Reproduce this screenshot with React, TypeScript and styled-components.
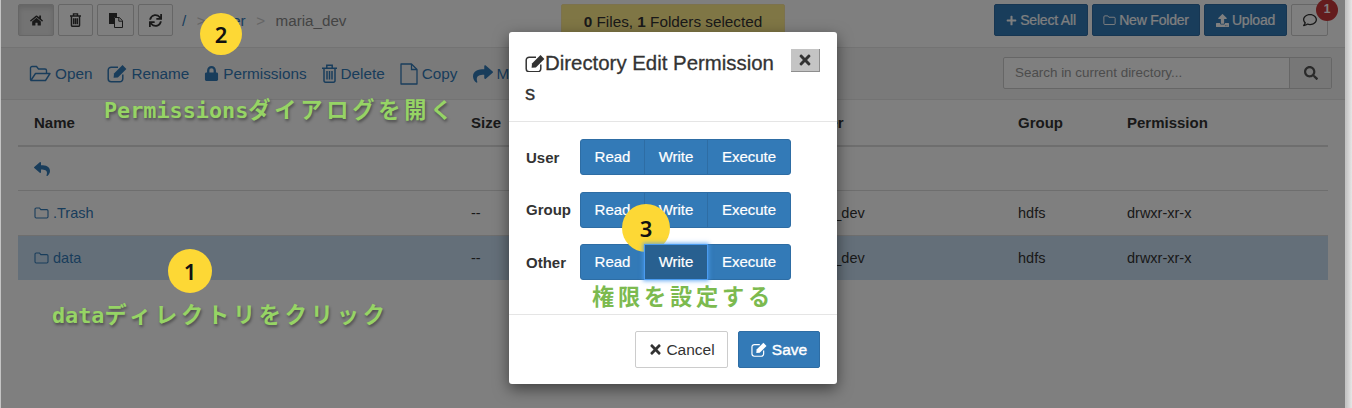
import React from 'react';
import styled, { createGlobalStyle } from 'styled-components';
import {
  FaHome,
  FaSync,
  FaPlus,
  FaUpload,
  FaRegComment,
  FaLock,
  FaShare,
  FaSearch,
  FaReply,
  FaTimes,
} from 'react-icons/fa';

const GlobalStyle = createGlobalStyle`
  html, body {
    margin: 0;
    padding: 0;
    background: #fff;
  }
`;

const Page = styled.div`
  position: relative;
  width: 1352px;
  height: 408px;
  overflow: hidden;
  background: linear-gradient(90deg, #c4c4c4 0, #c4c4c4 1346px, #e6e6e6 1352px);
  color: #333;
  font-family: 'Liberation Sans', Arial, sans-serif;
  font-size: 15px;
`;

const Shell = styled.div`
  width: 1344px;
  height: 408px;
  margin-left: 1px;
  background: #fff;
`;

const TopBar = styled.div`
  display: grid;
  grid-template-columns: 1fr 224px 1fr;
  height: 47px;
  padding: 4px 17px 0 17px;
  box-sizing: border-box;
`;

const Left = styled.div`
  display: flex;
  gap: 4px;
  align-items: flex-start;
`;

const IconButton = styled.button<{ $active?: boolean; $w: number }>`
  display: flex;
  align-items: center;
  justify-content: center;
  width: ${(p) => p.$w}px;
  height: 32px;
  padding: 0;
  border: 1px solid #ccc;
  border-radius: 2px;
  background: ${(p) => (p.$active ? '#e6e6e6' : '#fff')};
  box-shadow: ${(p) => (p.$active ? 'inset 0 3px 5px rgba(0,0,0,.125)' : 'none')};
  color: #333;
  font-size: 13px;
`;

const Crumbs = styled.div`
  display: flex;
  align-items: center;
  gap: 10.5px;
  height: 32px;
  margin-left: 5px;
  font-size: 15.2px;
`;

const CrumbLink = styled.span`
  color: #337ab7;
`;

const CrumbSep = styled.span`
  color: #ccc;
`;

const CrumbCurrent = styled.span`
  color: #888;
`;

const Selected = styled.div`
  height: 32px;
  line-height: 34px;
  text-align: center;
  background: #ffec8b;
  border: 1px solid #f8e59a;
  border-radius: 2px;
  box-sizing: border-box;
  font-size: 15.3px;
`;

const Right = styled.div`
  display: flex;
  gap: 4px;
  justify-content: flex-end;
  align-items: flex-start;
`;

const PrimaryButton = styled.button<{ $w: number }>`
  display: flex;
  align-items: center;
  justify-content: center;
  gap: 3px;
  width: ${(p) => p.$w}px;
  height: 32px;
  padding: 0;
  border: 1px solid #2e6da4;
  border-radius: 2px;
  background: #337ab7;
  color: #fff;
  font-family: inherit;
  font-size: 14px;
  letter-spacing: -0.2px;
  -webkit-text-stroke: 0.2px #fff;
`;

const CommentButton = styled(IconButton)`
  position: relative;
  font-size: 14px;
`;

const Badge = styled.span`
  position: absolute;
  top: -6px;
  right: -11px;
  width: 22px;
  height: 22px;
  border-radius: 50%;
  background: #c9393a;
  color: #fff;
  font-size: 12px;
  font-weight: 700;
  line-height: 20px;
  text-align: center;
`;

const Toolbar = styled.div`
  display: flex;
  align-items: center;
  justify-content: space-between;
  height: 53px;
  padding: 0 13px 0 28px;
  box-sizing: border-box;
  background: #f5f5f5;
  border-top: 1px solid #e7e7e7;
  border-bottom: 1px solid #e7e7e7;
`;

const Actions = styled.div`
  display: flex;
  gap: 15px;
`;

const Action = styled.span`
  display: flex;
  align-items: center;
  gap: 4px;
  color: #337ab7;
  font-size: 15.3px;
  white-space: nowrap;
`;

const Search = styled.div`
  display: flex;
  width: 329px;
  height: 32px;
  margin-top: -2px;
  box-sizing: border-box;
  border: 1px solid #ccc;
  border-radius: 2px;
  background: #fff;
`;

const SearchInput = styled.div`
  flex: 1;
  padding-left: 11px;
  color: #999;
  font-size: 13.4px;
  line-height: 30px;
`;

const SearchButton = styled.div`
  display: flex;
  align-items: center;
  justify-content: center;
  width: 41px;
  border-left: 1px solid #ccc;
  background: #eee;
  color: #555;
  font-size: 14px;
`;

const Table = styled.div`
  margin: 0 17px;
`;

const Row = styled.div<{ $head?: boolean; $selected?: boolean; $h: number }>`
  display: grid;
  grid-template-columns: 437px 326px 221px 109px 1fr;
  align-items: center;
  height: ${(p) => p.$h}px;
  padding-left: 16px;
  box-sizing: border-box;
  font-weight: ${(p) => (p.$head ? 700 : 400)};
  background: ${(p) => (p.$selected ? '#c9dff2' : 'transparent')};
  border-bottom: ${(p) => (p.$head ? '2px solid #ddd' : p.$selected ? 'none' : '1px solid #ddd')};
  font-size: ${(p) => (p.$head ? 15 : 14.5)}px;
`;

const FileLink = styled.span`
  display: flex;
  align-items: center;
  gap: 4px;
  color: #337ab7;
`;

const BackLink = styled(FileLink)`
  font-size: 16px;
`;

const Backdrop = styled.div`
  position: absolute;
  top: 0;
  bottom: 0;
  left: 1px;
  right: 7px;
  background: rgba(0, 0, 0, 0.5);
`;

const Modal = styled.div`
  position: absolute;
  left: 509px;
  top: 32px;
  width: 328px;
  height: 352px;
  display: flex;
  flex-direction: column;
  background: #fff;
  border-radius: 3px;
  box-shadow: 0 5px 15px rgba(0, 0, 0, 0.5);
`;

const ModalHeader = styled.div`
  display: flex;
  justify-content: space-between;
  align-items: flex-start;
  height: 90px;
  flex: none;
  padding: 16px 17px 0 16px;
  box-sizing: border-box;
  border-bottom: 1px solid #e5e5e5;
`;

const ModalTitle = styled.div`
  width: 254px;
  font-size: 20.4px;
  line-height: 30px;
  word-break: break-all;
  -webkit-text-stroke: 0.3px #333;
  svg {
    vertical-align: -2px;
  }
`;

const CloseButton = styled.div`
  display: flex;
  align-items: center;
  justify-content: center;
  width: 29px;
  height: 23px;
  margin-top: 1px;
  box-sizing: border-box;
  background: #c4c4c4;
  border-right: 1px solid #8e8e8e;
  border-bottom: 1px solid #8e8e8e;
  color: #333;
  font-size: 16px;
`;

const ModalBody = styled.div`
  flex: 1;
  padding: 17px 17px 0;
  display: flex;
  flex-direction: column;
  gap: 16.5px;
`;

const PermRow = styled.div`
  display: flex;
  align-items: center;
  height: 36px;
`;

const PermLabel = styled.div`
  width: 54px;
  font-weight: 700;
  font-size: 15px;
`;

const BtnGroup = styled.div`
  display: flex;
  height: 36px;
`;

const PermBtn = styled.div<{ $w: number; $on?: boolean }>`
  width: ${(p) => p.$w}px;
  line-height: 34px;
  text-align: center;
  box-sizing: border-box;
  color: #fff;
  font-size: 15px;
  -webkit-text-stroke: 0.2px #fff;
  background: ${(p) => (p.$on ? '#286090' : '#337ab7')};
  border: 1px solid ${(p) => (p.$on ? '#4a9bf0' : '#2e6da4')};
  box-shadow: ${(p) => (p.$on ? '0 0 4px 1px rgba(74,155,240,.8)' : 'none')};
  position: relative;
  z-index: ${(p) => (p.$on ? 1 : 0)};
  margin-left: -1px;
  &:first-child {
    margin-left: 0;
    border-radius: 3px 0 0 3px;
  }
  &:last-child {
    border-radius: 0 3px 3px 0;
  }
`;

const ModalFooter = styled.div`
  display: flex;
  justify-content: flex-end;
  gap: 10px;
  height: 70px;
  flex: none;
  padding: 16px 17px 0;
  box-sizing: border-box;
  border-top: 1px solid #e5e5e5;
`;

const FootBtn = styled.div<{ $w: number; $primary?: boolean }>`
  display: flex;
  align-items: center;
  justify-content: center;
  gap: ${(p) => (p.$primary ? 5 : 3)}px;
  width: ${(p) => p.$w}px;
  height: 37px;
  box-sizing: border-box;
  border-radius: 2px;
  border: 1px solid ${(p) => (p.$primary ? '#2e6da4' : '#ccc')};
  background: ${(p) => (p.$primary ? '#337ab7' : '#fff')};
  color: ${(p) => (p.$primary ? '#fff' : '#333')};
  font-size: 15.5px;
  -webkit-text-stroke: ${(p) => (p.$primary ? '0.4px #fff' : '0')};
`;

const Step = styled.div<{ $x: number; $y: number; $size: number }>`
  position: absolute;
  left: ${(p) => p.$x}px;
  top: ${(p) => p.$y}px;
  width: ${(p) => p.$size}px;
  height: ${(p) => p.$size}px;
  border-radius: 50%;
  background: #fdd835;
  color: #111;
  font-family: 'Noto Sans', sans-serif;
  font-size: 22px;
  font-weight: 600;
  line-height: ${(p) => p.$size}px;
  text-align: center;
`;

const Note = styled.div<{ $x: number; $y: number; $plain?: boolean }>`
  position: absolute;
  left: ${(p) => p.$x}px;
  top: ${(p) => p.$y}px;
  color: ${(p) => (p.$plain ? '#7cba4f' : '#96d465')};
  font-family: 'DejaVu Sans Mono', 'Noto Sans CJK JP', monospace;
  font-size: 21.8px;
  font-weight: 700;
  line-height: 26px;
  white-space: nowrap;
  text-shadow: ${(p) => (p.$plain ? 'none' : '1px 2px 3px rgba(0,0,0,.4)')};
`;

const Kana = styled.span`
  font-family: 'Noto Sans CJK JP', sans-serif;
  font-size: 22.2px;
  letter-spacing: 3.8px;
`;

const FolderIcon = ({ size = 15 }: { size?: number }) => (
  <svg width={size} height={size * 0.8} viewBox="0 0 15 12" fill="none" stroke="currentColor" strokeWidth="1.1">
    <path d="M1 2.2A1.2 1.2 0 0 1 2.2 1h3.3l1.3 1.6h6a1.2 1.2 0 0 1 1.2 1.2v6a1.2 1.2 0 0 1-1.2 1.2H2.2A1.2 1.2 0 0 1 1 9.8z" />
  </svg>
);

const FolderOpenIcon = () => (
  <svg width="22" height="17" viewBox="0 0 22 17" fill="none" stroke="currentColor" strokeWidth="1.4">
    <path d="M1.5 15V3A1.5 1.5 0 0 1 3 1.5h4.5l2 2.5H16A1.5 1.5 0 0 1 17.5 5.5V8" />
    <path d="M1.8 15.5H16.5L21 8.5H6.5z" strokeLinejoin="round" />
  </svg>
);

const EditIcon = ({ size = 20 }: { size?: number }) => (
  <svg width={size} height={size * 0.92} viewBox="0 0 20 18.4" fill="none" stroke="currentColor" strokeWidth="1.5">
    <path d="M11 3.2H4.2a3 3 0 0 0-3 3v8.6a3 3 0 0 0 3 3h8.6a3 3 0 0 0 3-3V10.5" />
    <path d="M7 9.5 15.5 1 19.4 4.9 10.9 13.4 6.6 13.8z" fill="currentColor" stroke="none" />
  </svg>
);

const TrashIcon = ({ w = 15, weight = 1.5 }: { w?: number; weight?: number }) => (
  <svg width={w} height={(w * 19) / 15} viewBox="0 0 15 19" fill="none" stroke="currentColor" strokeWidth={weight}>
    <path d="M4.8 4V1.2h5.4V4M0 4.2h15" />
    <path d="M2 4.5V17A1.5 1.5 0 0 0 3.5 18.2h8A1.5 1.5 0 0 0 13 17V4.5" />
    <path d="M5 7v8.5M7.5 7v8.5M10 7v8.5" />
  </svg>
);

const FileIcon = () => (
  <svg width="18" height="22" viewBox="0 0 18 22" fill="none" stroke="currentColor" strokeWidth="1.3">
    <path d="M1 1h10.5L17 6.5V21H1z" strokeLinejoin="round" />
    <path d="M11.5 1v5.5H17" />
  </svg>
);

const FilesIcon = () => (
  <svg width="14" height="15" viewBox="0 0 14 15">
    <path d="M0 0h8v4H5v7H0z" fill="currentColor" />
    <path d="M5.5 4.5h4.8l3.2 3.2v6.8h-8z" fill="none" stroke="currentColor" />
    <path d="M9.8 4.5v3.7h3.7" fill="none" stroke="currentColor" />
  </svg>
);

export default function App() {
  return (
    <Page>
      <GlobalStyle />
      <Shell>
        <TopBar>
          <Left>
            <IconButton $w={36} $active>
              <FaHome />
            </IconButton>
            <IconButton $w={35}>
              <TrashIcon w={11} weight={2} />
            </IconButton>
            <IconButton $w={37}>
              <FilesIcon />
            </IconButton>
            <IconButton $w={35}>
              <FaSync />
            </IconButton>
            <Crumbs>
              <CrumbLink>/</CrumbLink>
              <CrumbSep>&gt;</CrumbSep>
              <CrumbLink>user</CrumbLink>
              <CrumbSep>&gt;</CrumbSep>
              <CrumbCurrent>maria_dev</CrumbCurrent>
            </Crumbs>
          </Left>
          <Selected>
            <b>0</b> Files, <b>1</b> Folders selected
          </Selected>
          <Right>
            <PrimaryButton $w={94}>
              <FaPlus size={11} /> Select All
            </PrimaryButton>
            <PrimaryButton $w={108}>
              <FolderIcon size={13} /> New Folder
            </PrimaryButton>
            <PrimaryButton $w={83}>
              <FaUpload size={13} /> Upload
            </PrimaryButton>
            <CommentButton $w={37}>
              <FaRegComment />
              <Badge>1</Badge>
            </CommentButton>
          </Right>
        </TopBar>
        <Toolbar>
          <Actions>
            <Action>
              <FolderOpenIcon /> Open
            </Action>
            <Action>
              <EditIcon /> Rename
            </Action>
            <Action>
              <FaLock size={15} /> Permissions
            </Action>
            <Action>
              <TrashIcon /> Delete
            </Action>
            <Action>
              <FileIcon /> Copy
            </Action>
            <Action>
              <FaShare size={20} /> Move
            </Action>
          </Actions>
          <Search>
            <SearchInput>Search in current directory...</SearchInput>
            <SearchButton>
              <FaSearch />
            </SearchButton>
          </Search>
        </Toolbar>
        <Table>
          <Row $head $h={47}>
            <span>Name</span>
            <span>Size</span>
            <span>Owner</span>
            <span>Group</span>
            <span>Permission</span>
          </Row>
          <Row $h={44}>
            <BackLink>
              <FaReply />
            </BackLink>
          </Row>
          <Row $h={45}>
            <FileLink>
              <FolderIcon /> .Trash
            </FileLink>
            <span>--</span>
            <span>maria_dev</span>
            <span>hdfs</span>
            <span>drwxr-xr-x</span>
          </Row>
          <Row $h={44} $selected>
            <FileLink>
              <FolderIcon /> data
            </FileLink>
            <span>--</span>
            <span>maria_dev</span>
            <span>hdfs</span>
            <span>drwxr-xr-x</span>
          </Row>
        </Table>
      </Shell>
      <Backdrop />
      <Modal>
        <ModalHeader>
          <ModalTitle>
            <EditIcon />
            Directory Edit Permissions
          </ModalTitle>
          <CloseButton>
            <FaTimes />
          </CloseButton>
        </ModalHeader>
        <ModalBody>
          {['User', 'Group', 'Other'].map((who) => (
            <PermRow key={who}>
              <PermLabel>{who}</PermLabel>
              <BtnGroup>
                <PermBtn $w={65}>Read</PermBtn>
                <PermBtn $w={64} $on={who === 'Other'}>
                  Write
                </PermBtn>
                <PermBtn $w={84}>Execute</PermBtn>
              </BtnGroup>
            </PermRow>
          ))}
        </ModalBody>
        <ModalFooter>
          <FootBtn $w={93}>
            <FaTimes size={15} /> Cancel
          </FootBtn>
          <FootBtn $w={82} $primary>
            <EditIcon size={16} /> Save
          </FootBtn>
        </ModalFooter>
      </Modal>
      <Step $x={168} $y={249} $size={44}>1</Step>
      <Step $x={200} $y={13} $size={42}>2</Step>
      <Step $x={622} $y={204} $size={48}>3</Step>
      <Note $x={104} $y={95}>
        Permissions<Kana>ダイアログを開く</Kana>
      </Note>
      <Note $x={52} $y={300}>
        data<Kana>ディレクトリをクリック</Kana>
      </Note>
      <Note $x={592} $y={282} $plain>
        <Kana>権限を設定する</Kana>
      </Note>
    </Page>
  );
}
